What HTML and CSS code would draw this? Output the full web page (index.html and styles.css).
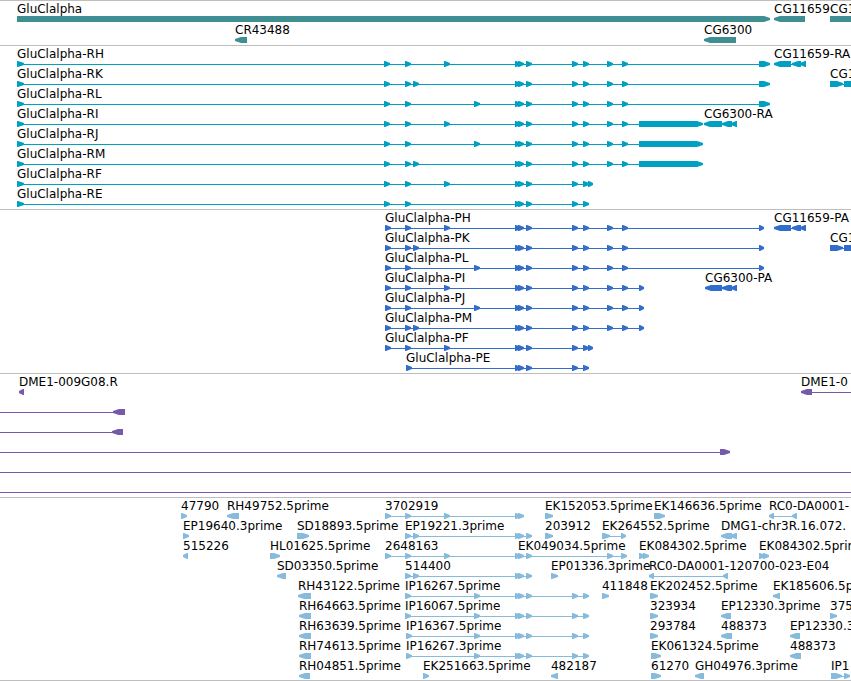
FILE: index.html
```html
<!DOCTYPE html>
<html lang="en">
    <head>
        <meta charset="utf-8">
        <title>GluClalpha region</title>
        <link rel="stylesheet" href="styles.css">
    </head>
    <body>
        <main class="browser">
            <section class="track genes" id="genes" aria-label="Genes"></section>
            <section class="track transcripts" id="transcripts" aria-label="Transcripts"></section>
            <section class="track proteins" id="proteins" aria-label="Coding sequences"></section>
            <section class="track bacs" id="bacs" aria-label="BAC ends"></section>
            <section class="track ests" id="ests" aria-label="ESTs"></section>
        </main>
        <script src="tracks.js"></script>
    </body>
</html>
```
FILE: styles.css
```css
body {
    margin: 0;
    background-color: #fff;
    color: #000;
    font-family: "DejaVu Sans", sans-serif;
    font-size: 12px;
}

.browser {
    overflow: hidden;
    border-bottom: 1px solid #bebebe;
}

.track {
    border-top: 1px solid #bebebe;
    padding-bottom: 3px;
}

.lane {
    position: relative;
    height: 20px;
}

.genes .lane {
    height: 21px;
}

.genes,
.ests {
    padding-bottom: 2px;
}

.genes {
    color: #3f8e94;
}

.transcripts {
    color: #00a0c2;
}

.proteins {
    color: #336dcc;
}

.bacs {
    color: #7759a9;
}

.ests {
    color: #87bbdd;
}

/* features sit at their place on the sequence */
.feature {
    position: absolute;
    top: 0;
}

.label {
    height: 15px;
    line-height: 17px;
    color: #000;
    white-space: nowrap;
}

.glyph {
    position: relative;
    height: 6px;
    background: linear-gradient(currentColor, currentColor) 0 3px / 100% 1px no-repeat;
}

.block {
    position: absolute;
    top: 0;
    height: 6px;
    background-color: currentColor;
}

.forward .block {
    clip-path: polygon(0 0, max(1px, 100% - 6px) 0, 100% 2px, 100% 4px, max(1px, 100% - 6px) 100%, 0 100%);
}

.reverse .block {
    clip-path: polygon(100% 0, min(100% - 1px, 6px) 0, 0 2px, 0 4px, min(100% - 1px, 6px) 100%, 100% 100%);
}
```
FILE: tracks.js
```js
const VIEW = 851;

// one array per lane, one entry per feature: label, strand, blocks, [line start, line end]
const F = "forward";
const R = "reverse";

function heads(...starts) {
    return starts.map((start) => [start, start + 6]);
}

const middle = heads(515, 518, 526, 572, 583);
const tail = [...middle, ...heads(607, 622)];
const last = [759, 770];
const long = [639, 703];

const tracks = {
    genes: [
        [["GluClalpha", F, [[17, 770]]], ["CG11659", R, [[774, 805]]], ["CG1", F, [[830, 880]]]],
        [["CR43488", R, [[235, 247]]], ["CG6300", R, [[704, 736]]]],
    ],
    transcripts: [
        [
            ["GluClalpha-RH", F, [[17, 24], ...heads(384, 405, 444), ...tail, last]],
            ["CG11659-RA", R, [[774, 791], [792, 801], [800, 806]]],
        ],
        [
            ["GluClalpha-RK", F, [[17, 24], ...heads(384, 405, 413), ...tail, last]],
            ["CG1", F, [[830, 843], [844, 880]]],
        ],
        [["GluClalpha-RL", F, [[17, 24], ...heads(384, 405, 474), ...tail, last]]],
        [
            ["GluClalpha-RI", F, [[17, 24], ...heads(384, 405, 444), ...tail, long]],
            ["CG6300-RA", R, [[704, 722], [722, 732], [731, 737]]],
        ],
        [["GluClalpha-RJ", F, [[17, 24], ...heads(384, 405, 474), ...tail, long]]],
        [["GluClalpha-RM", F, [[17, 24], ...heads(384, 405, 413), ...tail, long]]],
        [["GluClalpha-RF", F, [[17, 24], ...heads(384, 405, 444), ...middle, [588, 593]]]],
        [["GluClalpha-RE", F, [[17, 24], ...heads(384, 405), ...middle]]],
    ],
    proteins: [
        [
            ["GluClalpha-PH", F, [...heads(385, 405, 444), ...tail, [759, 764]]],
            ["CG11659-PA", R, [[774, 791], [792, 801], [800, 806]]],
        ],
        [
            ["GluClalpha-PK", F, [...heads(385, 405, 413), ...tail, [759, 764]]],
            ["CG1", F, [[830, 843], [844, 880]]],
        ],
        [["GluClalpha-PL", F, [...heads(385, 405, 474), ...tail, [759, 764]]]],
        [
            ["GluClalpha-PI", F, [...heads(385, 405, 444), ...tail, [639, 644]]],
            ["CG6300-PA", R, [[705, 722], [722, 732], [731, 737]]],
        ],
        [["GluClalpha-PJ", F, [...heads(385, 405, 474), ...tail, [639, 644]]]],
        [["GluClalpha-PM", F, [...heads(385, 405, 413), ...tail, [639, 644]]]],
        [["GluClalpha-PF", F, [...heads(385, 405, 444), ...middle, [588, 593]]]],
        [["GluClalpha-PE", F, [...heads(406), ...middle]]],
    ],
    bacs: [
        [["DME1-009G08.R", R, [[19, 24]]], ["DME1-0", R, [[801, 812]], [801, 880]]],
        [["", R, [[113, 125]], [0, 125]]],
        [["", R, [[112, 123]], [0, 123]]],
        [["", F, [[720, 730]], [0, 730]]],
        [["", F, [], [0, 851]]],
        [["", F, [], [0, 851]]],
    ],
    ests: [
        [
            ["47790", F, heads(181)],
            ["RH49752.5prime", R, [[227, 239]]],
            ["3702919", F, heads(385, 405, 444, 515, 518)],
            ["EK152053.5prime", F, [[545, 553]]],
            ["EK146636.5prime", F, [[654, 665]]],
            ["RC0-DA0001-", R, [[769, 774], [792, 797]]],
        ],
        [
            ["EP19640.3prime", F, heads(183)],
            ["SD18893.5prime", F, [[297, 309]]],
            ["EP19221.3prime", F, heads(405, 413, 515, 518, 526)],
            ["203912", F, [[545, 553]]],
            ["EK264552.5prime", F, [[602, 610], [621, 626]]],
            ["DMG1-chr3R.16.072.", R, [[721, 732], [730, 737]]],
        ],
        [
            ["515226", R, [[183, 188]]],
            ["HL01625.5prime", F, [[270, 280]]],
            ["2648163", F, heads(385, 405, 444, 515)],
            ["EK049034.5prime", F, heads(518, 526, 607, 621)],
            ["EK084302.5prime", F, heads(639, 643)],
            ["EK084302.5prime", F, heads(759, 763)],
        ],
        [
            ["SD03350.5prime", R, [[277, 286]]],
            ["514400", F, heads(405, 413, 515, 518, 526)],
            ["EP01336.3prime", F, [[551, 558]]],
            ["RC0-DA0001-120700-023-E04", R, [[649, 654], [723, 728]]],
        ],
        [
            ["RH43122.5prime", R, [[298, 311]]],
            ["IP16267.5prime", F, heads(405, 474, 515, 518, 526, 572, 583)],
            ["411848", F, [[602, 609]]],
            ["EK202452.5prime", F, [[650, 658]]],
            ["EK185606.5prime", R, [[773, 780]]],
        ],
        [
            ["RH64663.5prime", R, [[299, 311]]],
            ["IP16067.5prime", F, heads(405, 474, 515, 518, 526, 572, 583)],
            ["323934", F, [[650, 658]]],
            ["EP12330.3prime", R, [[721, 731]]],
            ["375", F, [[830, 837]]],
        ],
        [
            ["RH63639.5prime", R, [[299, 311]]],
            ["IP16367.5prime", F, heads(406, 474, 515, 518, 526, 572, 583)],
            ["293784", F, [[650, 658]]],
            ["488373", R, [[721, 732]]],
            ["EP12330.3prime", R, [[790, 800]]],
        ],
        [
            ["RH74613.5prime", R, [[299, 311]]],
            ["IP16267.3prime", F, heads(406, 474, 515, 518, 526, 572, 583)],
            ["EK061324.5prime", F, [[651, 661]]],
            ["488373", R, [[790, 801]]],
        ],
        [
            ["RH04851.5prime", R, [[299, 310]]],
            ["EK251663.5prime", F, heads(423)],
            ["482187", R, [[551, 558]]],
            ["61270", F, [[651, 661]]],
            ["GH04976.3prime", R, [[695, 704]]],
            ["IP1", F, [[831, 842], [844, 850]]],
        ],
    ],
};

function element(className, parent) {
    const node = document.createElement("div");
    node.className = className;
    parent.appendChild(node);
    return node;
}

function place(node, start, end, from, size) {
    node.style.left = ((start - from) / size) * 100 + "%";
    node.style.width = ((end - start) / size) * 100 + "%";
}

function drawFeature(lane, [name, strand, blocks, line]) {
    const ends = blocks.map((block) => block[1]);
    const [start, end] = line || [blocks[0][0], Math.max(...ends)];
    const feature = element("feature " + strand, lane);
    place(feature, start, end, 0, VIEW);

    element("label", feature).textContent = name;
    const glyph = element("glyph", feature);
    blocks.forEach((block) => {
        place(element("block", glyph), block[0], block[1], start, end - start);
    });
}

Object.entries(tracks).forEach(([id, lanes]) => {
    const track = document.getElementById(id);
    lanes.forEach((features) => {
        const lane = element("lane", track);
        features.forEach((feature) => drawFeature(lane, feature));
    });
});
```
